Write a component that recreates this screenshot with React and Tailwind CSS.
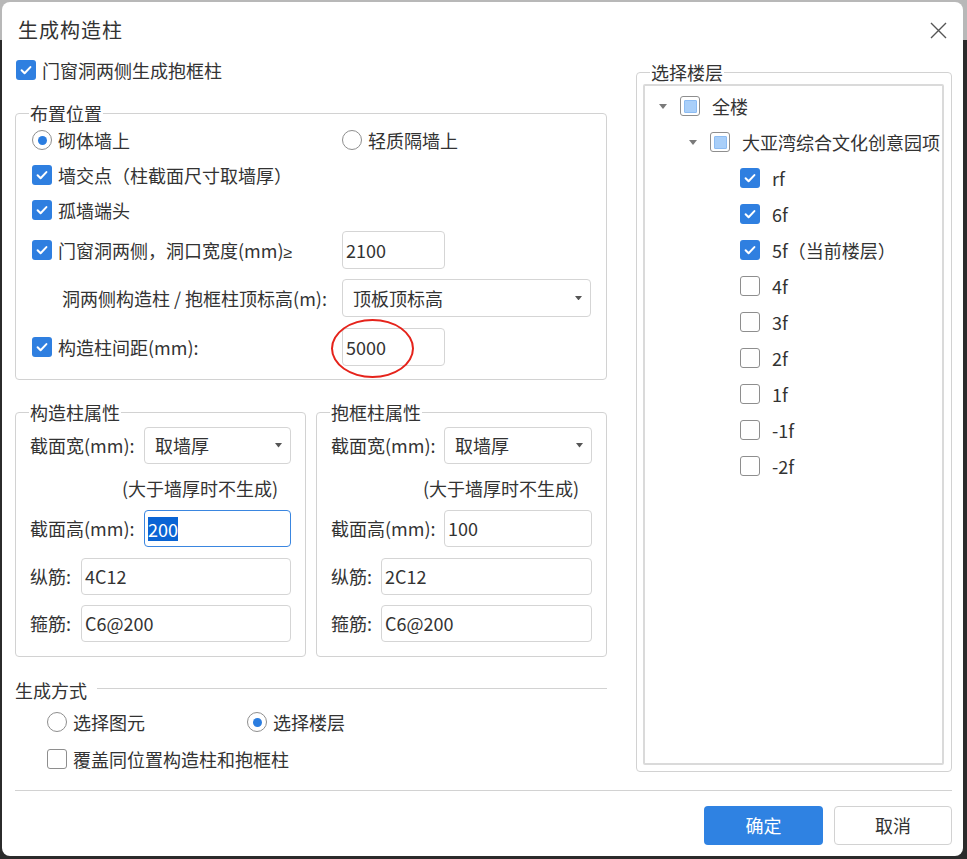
import React from "react";

function Check({ checked, partial }) {
  if (checked) {
    return (
      <span className="flex h-[20px] w-[20px] shrink-0 items-center justify-center rounded-[3px] bg-[#2f7fe0]">
        <svg width="14" height="14" viewBox="0 0 14 14">
          <path d="M2.6 7.3l3 3 5.8-6.2" fill="none" stroke="white" strokeWidth="2" strokeLinecap="round" strokeLinejoin="round" />
        </svg>
      </span>
    );
  }
  return (
    <span className="flex h-[20px] w-[20px] shrink-0 items-center justify-center rounded-[3px] border border-[#8e8e8e] bg-white">
      {partial && <span className="h-[13px] w-[13px] rounded-[1px] border border-[#8dbcf2] bg-[#a9cff9]" />}
    </span>
  );
}

function Radio({ checked }) {
  return (
    <span className="flex h-[20px] w-[20px] shrink-0 items-center justify-center rounded-full border border-[#8e8e8e] bg-white">
      {checked && <span className="h-[9px] w-[9px] rounded-full bg-[#2b7de0]" />}
    </span>
  );
}

function Arrow({ size = 8, color = "#666" }) {
  return (
    <svg width={size} height={size / 2 + 1} viewBox="0 0 8 5">
      <path d="M0 0h8L4 5z" fill={color} />
    </svg>
  );
}

function Group({ title, className, children }) {
  return (
    <div className={"relative rounded-[4px] border border-[#d2d2d2] " + className}>
      <span className="absolute left-[13px] top-[-13px] bg-white px-[1px] leading-[24px]">{title}</span>
      {children}
    </div>
  );
}

function TreeRow({ level, arrow, checked, partial, label }) {
  const pl = level === 0 ? "pl-[10px]" : level === 1 ? "pl-[40px]" : "pl-[70px]";
  return (
    <div className={"flex h-[36px] items-center whitespace-nowrap " + pl}>
      <span className="mr-[9px] flex w-[16px] shrink-0 items-center justify-center">
        {arrow && <Arrow color="#7a7a7a" />}
      </span>
      <Check checked={checked} partial={partial} />
      <span className="ml-[12px]">{label}</span>
    </div>
  );
}

export default function App() {
  const floors = [
    { l: "rf", c: true },
    { l: "6f", c: true },
    { l: "5f（当前楼层）", c: true },
    { l: "4f" },
    { l: "3f" },
    { l: "2f" },
    { l: "1f" },
    { l: "-1f" },
    { l: "-2f" },
  ];
  return (
    <div className="h-[859px] w-[967px] bg-[linear-gradient(to_bottom,#b8b8b8_0,#b8b8b8_40px,#2b2b2b_40px)] pb-[3px] pl-[2px] pr-[4px] pt-[2px] font-['Noto_Sans_CJK_SC','Noto_Sans',sans-serif] text-[18px] text-[#333]">
      <div className="flex h-full w-full flex-col overflow-hidden rounded-[8px] bg-white pl-[13px] pr-[11px]">
        {/* header */}
        <div className="flex h-[56px] shrink-0 items-center justify-between pl-[3px] pr-[5px]">
          <span className="text-[20px] tracking-[1px]">生成构造柱</span>
          <svg width="17" height="17" viewBox="0 0 17 17">
            <path d="M1 1l15 15M16 1L1 16" stroke="#555" strokeWidth="1.4" fill="none" />
          </svg>
        </div>

        {/* body */}
        <div className="flex gap-[29px]">
          {/* left column */}
          <div className="flex w-[592px] flex-col">
            <div className="flex h-[24px] items-center gap-[6px] pl-[1px]">
              <Check checked />
              <span>门窗洞两侧生成抱框柱</span>
            </div>

            <Group title="布置位置" className="mt-[31px] h-[267px] pl-[16px] pt-[11px]">
              <div className="flex h-[30px] items-center">
                <div className="flex w-[310px] items-center gap-[6px]">
                  <Radio checked />
                  <span>砌体墙上</span>
                </div>
                <div className="flex items-center gap-[6px]">
                  <Radio />
                  <span>轻质隔墙上</span>
                </div>
              </div>
              <div className="mt-[5px] flex h-[30px] items-center gap-[6px]">
                <Check checked />
                <span>墙交点（柱截面尺寸取墙厚）</span>
              </div>
              <div className="mt-[5px] flex h-[30px] items-center gap-[6px]">
                <Check checked />
                <span>孤墙端头</span>
              </div>
              <div className="mt-[6px] flex h-[38px] items-center">
                <div className="flex w-[310px] items-center gap-[6px]">
                  <Check checked />
                  <span>
                    门窗洞两侧，洞口宽度(mm)
                    <span className="font-['Noto_Sans',sans-serif] text-[16px]">≥</span>
                  </span>
                </div>
                <div className="flex h-[38px] w-[103px] items-center rounded-[4px] border border-[#d5d5d5] pl-[3px]">2100</div>
              </div>
              <div className="mt-[10px] flex h-[38px] items-center">
                <div className="w-[310px] pl-[30px]">洞两侧构造柱 / 抱框柱顶标高(m):</div>
                <div className="flex h-[38px] w-[249px] items-center justify-between rounded-[4px] border border-[#d5d5d5] pl-[10px] pr-[8px]">
                  <span>顶板顶标高</span>
                  <Arrow size={7} color="#555" />
                </div>
              </div>
              <div className="mt-[11px] flex h-[38px] items-center">
                <div className="flex w-[310px] items-center gap-[6px]">
                  <Check checked />
                  <span>构造柱间距(mm):</span>
                </div>
                <div className="relative flex h-[38px] w-[103px] items-center rounded-[4px] border border-[#d5d5d5] pl-[3px]">
                  5000
                  <span className="pointer-events-none absolute left-[-12px] top-[-10px] h-[59px] w-[83px] rounded-[50%] border-2 border-[#e5231b]" />
                </div>
              </div>
            </Group>

            <div className="mt-[32px] flex gap-[10px]">
              {[
                { t: "构造柱属性", h: "200", z: "4C12", focus: true, sw: "w-[147px]", iw: "w-[210px]" },
                { t: "抱框柱属性", h: "100", z: "2C12", focus: false, sw: "w-[148px]", iw: "w-[211px]" },
              ].map((g) => (
                <Group key={g.t} title={g.t} className="h-[245px] flex-1 pl-[14px] pr-[14px] pt-[14px]">
                  <div className="flex h-[37px] items-center justify-between">
                    <span>截面宽(mm):</span>
                    <div className={"flex h-[37px] items-center justify-between rounded-[4px] border border-[#d5d5d5] pl-[10px] pr-[8px] " + g.sw}>
                      <span>取墙厚</span>
                      <Arrow size={7} color="#555" />
                    </div>
                  </div>
                  <div className="mt-[12px] flex h-[24px] items-center pl-[92px]">(大于墙厚时不生成)</div>
                  <div className="mt-[10px] flex h-[37px] items-center justify-between">
                    <span>截面高(mm):</span>
                    <div
                      className={
                        "flex h-[37px] items-center rounded-[4px] border pl-[3px] " +
                        g.sw +
                        (g.focus ? " border-[#3a86e0]" : " border-[#d5d5d5]")
                      }
                    >
                      {g.focus ? <span className="bg-[#0a64d4] leading-[24px] text-white">{g.h}</span> : g.h}
                    </div>
                  </div>
                  <div className="mt-[11px] flex h-[37px] items-center justify-between">
                    <span>纵筋:</span>
                    <div className={"flex h-[37px] items-center rounded-[4px] border border-[#d5d5d5] pl-[3px] " + g.iw}>{g.z}</div>
                  </div>
                  <div className="mt-[10px] flex h-[37px] items-center justify-between">
                    <span>箍筋:</span>
                    <div className={"flex h-[37px] items-center rounded-[4px] border border-[#d5d5d5] pl-[3px] " + g.iw}>C6@200</div>
                  </div>
                </Group>
              ))}
            </div>

            <div className="mt-[21px] flex h-[24px] items-center gap-[10px]">
              <span>生成方式</span>
              <span className="mt-[-3px] h-px flex-1 bg-[#d2d2d2]" />
            </div>
            <div className="mt-[8px] flex h-[24px] items-center pl-[32px]">
              <div className="flex w-[200px] items-center gap-[6px]">
                <Radio />
                <span>选择图元</span>
              </div>
              <div className="flex items-center gap-[6px]">
                <Radio checked />
                <span>选择楼层</span>
              </div>
            </div>
            <div className="mt-[13px] flex h-[24px] items-center gap-[6px] pl-[32px]">
              <Check />
              <span>覆盖同位置构造柱和抱框柱</span>
            </div>
          </div>

          {/* right column */}
          <div className="w-[316px]">
            <Group title="选择楼层" className="mt-[14px] h-[700px] pb-[6px] pl-[6px] pr-[7px] pt-[11px]">
              <div className="h-full overflow-hidden rounded-[2px] border-2 border-[#dadada] pt-[2px]">
                <TreeRow level={0} arrow partial label="全楼" />
                <TreeRow level={1} arrow partial label="大亚湾综合文化创意园项目" />
                {floors.map((f) => (
                  <TreeRow key={f.l} level={2} checked={f.c} label={f.l} />
                ))}
              </div>
            </Group>
          </div>
        </div>

        {/* footer */}
        <div className="mt-[18px] h-px bg-[#d2d2d2]" />
        <div className="mt-[15px] flex justify-end gap-[11px]">
          <button className="flex h-[39px] w-[119px] items-center justify-center rounded-[4px] bg-[#2f82e2] text-white">确定</button>
          <button className="flex h-[39px] w-[118px] items-center justify-center rounded-[4px] border border-[#d2d2d2] bg-white">取消</button>
        </div>
      </div>
    </div>
  );
}
